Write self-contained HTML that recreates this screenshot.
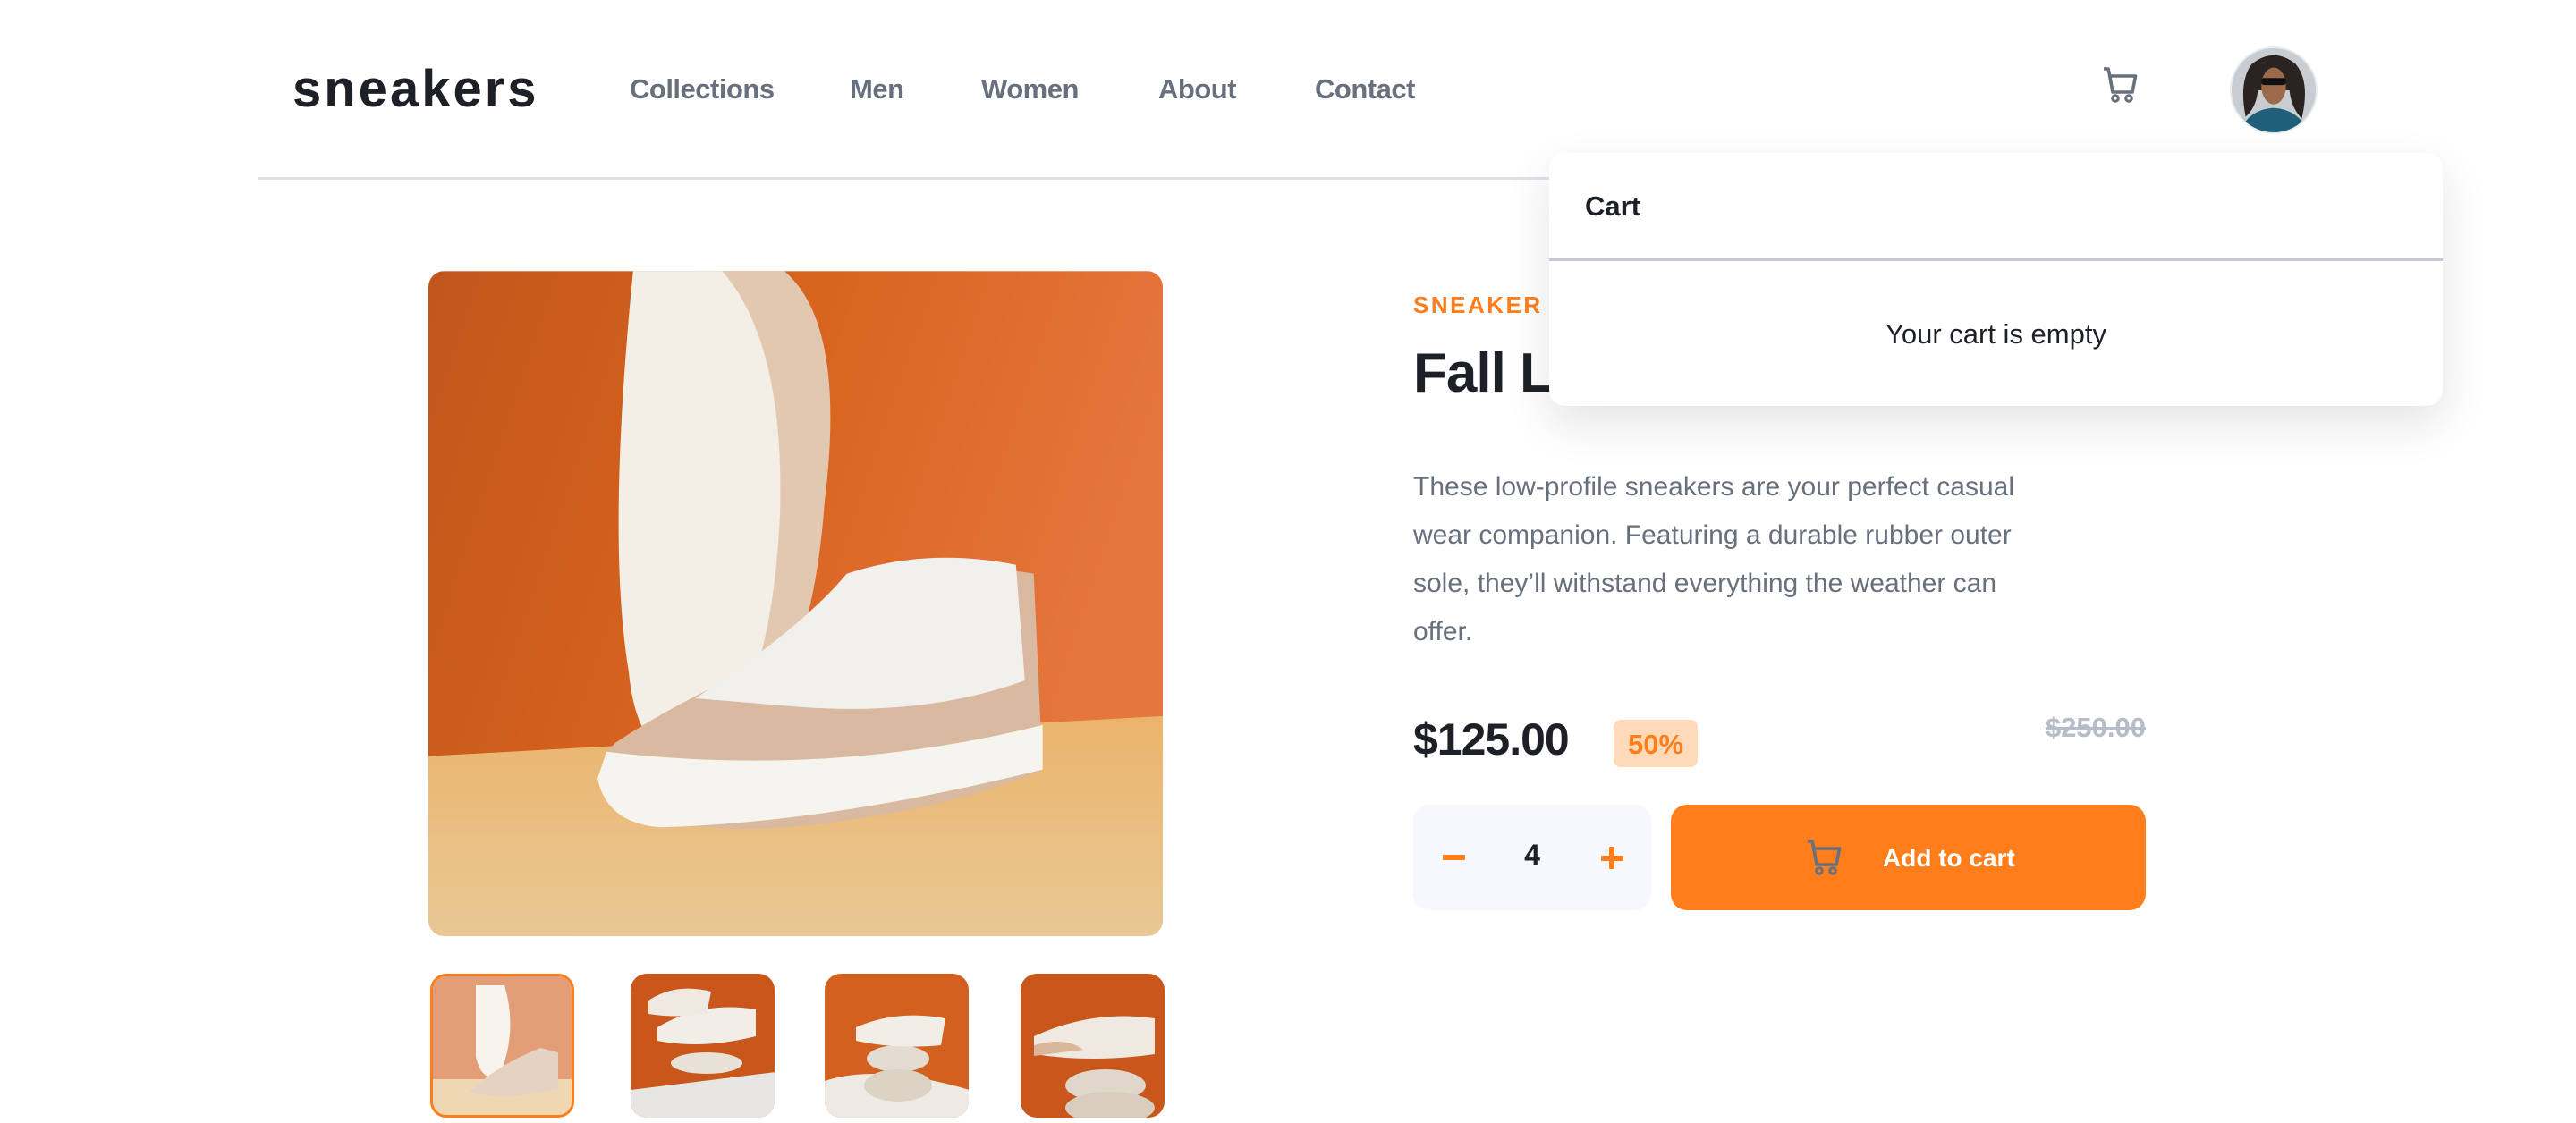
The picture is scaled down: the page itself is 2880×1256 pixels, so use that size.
<!DOCTYPE html>
<html><head><meta charset="utf-8"><style>
*{margin:0;padding:0;box-sizing:border-box}
body{width:2880px;height:1256px;overflow:hidden;background:#fff;font-family:"Liberation Sans",sans-serif;position:relative;color:#1d2026}
.abs{position:absolute}
.logo{left:327px;top:66px;font-size:58px;font-weight:bold;letter-spacing:3px;color:#1d2026}
.nav{top:82px;font-size:31px;font-weight:bold;color:#69707d;letter-spacing:-0.5px}
.hline{left:288px;top:198px;width:2300px;height:3px;background:#dfe2ea}
.pop{left:1732px;top:171px;width:999px;height:283px;background:#fff;border-radius:18px;box-shadow:0 20px 50px rgba(29,32,38,0.12)}
.img{left:479px;top:303px;width:821px;height:744px;border-radius:18px;overflow:hidden}
.th{top:1089px;width:161px;height:161px;border-radius:18px;overflow:hidden}
.desc{left:1580px;top:518px;width:820px;font-size:30px;line-height:54px;color:#69707d;white-space:nowrap}
</style></head><body>
<div class="abs logo">sneakers</div>
<div class="abs nav" style="left:704px">Collections</div>
<div class="abs nav" style="left:950px">Men</div>
<div class="abs nav" style="left:1097px">Women</div>
<div class="abs nav" style="left:1295px">About</div>
<div class="abs nav" style="left:1470px">Contact</div>
<div class="abs hline"></div>
<svg class="abs" style="left:2350px;top:74px" width="44" height="42" viewBox="0 0 22 20"><path d="M1 1h2.5l.5 2 2 11h11l1.8-9H4.5" fill="none" stroke="#69707d" stroke-width="1.8" stroke-linejoin="round"/><circle cx="7.5" cy="17.5" r="1.6" fill="none" stroke="#69707d" stroke-width="1.6"/><circle cx="15" cy="17.5" r="1.6" fill="none" stroke="#69707d" stroke-width="1.6"/></svg>
<svg class="abs" style="left:2493px;top:52px" width="98" height="98" viewBox="0 0 100 100"><defs><clipPath id="c"><circle cx="50" cy="50" r="49"/></clipPath></defs><g clip-path="url(#c)"><rect width="100" height="100" fill="#c9cdd1"/><path d="M18 80 Q10 40 25 20 Q50 0 75 20 Q92 40 82 82 Q70 70 68 50 L32 50 Q30 70 18 80Z" fill="#2a231f"/><ellipse cx="50" cy="45" rx="14" ry="21" fill="#9b6a4a"/><rect x="36" y="36" width="28" height="8" rx="3" fill="#111"/><path d="M10 100 Q20 72 50 70 Q80 72 90 100Z" fill="#1f5f7a"/></g><circle cx="50" cy="50" r="49" fill="none" stroke="#e9ecef" stroke-width="2"/></svg>

<div class="abs img"><svg width="821" height="744" viewBox="0 0 825 747"><defs><linearGradient id="g" x1="0" y1="0" x2="1" y2="0.3"><stop offset="0" stop-color="#c2561c"/><stop offset="0.5" stop-color="#d8641e"/><stop offset="1" stop-color="#e5763e"/></linearGradient><linearGradient id="f" x1="0" y1="0" x2="0" y2="1"><stop offset="0" stop-color="#eab46c"/><stop offset="1" stop-color="#e9c894"/></linearGradient></defs><rect width="825" height="747" fill="url(#g)"/><path d="M0 545 L825 500 L825 747 L0 747Z" fill="url(#f)"/><path d="M230 0 L400 0 Q470 60 445 260 Q430 470 340 540 Q250 560 230 460 Q200 300 230 0Z" fill="#e2c8b0"/><path d="M230 0 L330 0 Q400 80 395 270 Q385 500 300 545 Q235 555 225 450 Q200 300 230 0Z" fill="#f4efe6"/><path d="M210 600 Q180 560 210 530 Q300 470 430 420 Q500 350 560 330 Q620 330 680 340 L690 560 Q600 600 450 620 Q300 640 210 600Z" fill="#d9b9a0"/><path d="M300 480 Q420 400 470 340 Q560 310 660 330 L670 460 Q560 500 420 490Z" fill="#f2f0ec"/><path d="M190 570 Q200 620 260 625 Q450 620 690 560 L690 510 Q450 570 200 540Z" fill="#f6f4ef"/></svg></div>

<div class="abs th" style="left:481px;border:3px solid #ff7e1b;"><svg width="162" height="162"><rect width="162" height="162" fill="#d56a30"/><rect y="115" width="162" height="47" fill="#e9c28c"/><path d="M48 10 L80 10 Q95 60 75 110 Q55 120 48 90Z" fill="#f3eee5"/><path d="M40 130 Q70 100 120 80 L140 85 L140 125 Q90 140 40 130Z" fill="#d8bba2"/><rect width="162" height="162" fill="#fff" opacity="0.35"/></svg></div>
<div class="abs th" style="left:705px"><svg width="162" height="162"><rect width="162" height="162" fill="#c9561b"/><path d="M0 130 L162 110 L162 162 L0 162Z" fill="#e8e6e3"/><ellipse cx="85" cy="100" rx="40" ry="12" fill="#e7e1d8"/><path d="M30 60 Q80 30 140 40 L140 70 Q80 85 30 75Z" fill="#f1eee8"/><path d="M20 30 Q50 10 90 20 L85 45 Q50 50 20 45Z" fill="#efe9e1"/></svg></div>
<div class="abs th" style="left:922px"><svg width="162" height="162"><rect width="162" height="162" fill="#d3601e"/><path d="M0 120 Q60 100 162 130 L162 162 L0 162Z" fill="#ede9e3"/><ellipse cx="82" cy="95" rx="35" ry="15" fill="#e4dcd0"/><ellipse cx="82" cy="125" rx="38" ry="18" fill="#ddd3c5"/><path d="M35 60 Q80 40 135 50 L130 80 Q80 85 35 75Z" fill="#f1eee8"/></svg></div>
<div class="abs th" style="left:1141px"><svg width="162" height="162"><rect width="162" height="162" fill="#c9561b"/><ellipse cx="95" cy="125" rx="45" ry="18" fill="#e0d6ca"/><ellipse cx="100" cy="150" rx="50" ry="18" fill="#d8cdbf"/><path d="M15 70 Q80 40 150 50 L150 90 Q80 100 15 90Z" fill="#efe9e1"/><path d="M15 80 Q50 70 70 85 L15 92Z" fill="#d8b79b"/></svg></div>

<div class="abs" style="left:1580px;top:326px;font-size:26px;font-weight:bold;color:#ff7e1b;letter-spacing:2.5px">SNEAKER COMPANY</div>
<div class="abs" style="left:1580px;top:382px;font-size:62px;font-weight:bold;color:#1d2026;letter-spacing:-1px">Fall Limited Edition Sneakers</div>
<div class="abs desc">These low-profile sneakers are your perfect casual<br>wear companion. Featuring a durable rubber outer<br>sole, they’ll withstand everything the weather can<br>offer.</div>
<div class="abs" style="left:1580px;top:798px;font-size:50px;font-weight:bold;color:#1d2026;letter-spacing:-1px">$125.00</div>
<div class="abs" style="left:1804px;top:805px;width:94px;height:53px;background:#ffdab9;border-radius:8px;color:#ff7e1b;font-weight:bold;font-size:31px;text-align:center;line-height:55px">50%</div>
<div class="abs" style="left:2250px;top:796px;width:149px;text-align:right;font-size:31px;font-weight:bold;color:#b6bcc8;text-decoration:line-through">$250.00</div>
<div class="abs" style="left:1580px;top:900px;width:266px;height:118px;background:#f6f8fd;border-radius:18px"></div>
<div class="abs" style="left:1613px;top:956px;width:25px;height:6px;background:#ff7e1b;border-radius:1px"></div>
<div class="abs" style="left:1690px;top:938px;width:46px;text-align:center;font-size:32px;font-weight:bold;color:#1d2026">4</div>
<div class="abs" style="left:1790px;top:957px;width:25px;height:6px;background:#ff7e1b;border-radius:1px"></div>
<div class="abs" style="left:1799px;top:947px;width:6px;height:25px;background:#ff7e1b;border-radius:1px"></div>
<div class="abs" style="left:1868px;top:900px;width:531px;height:118px;background:#ff7e1b;border-radius:18px"></div>
<svg class="abs" style="left:2019px;top:938px" width="44" height="42" viewBox="0 0 22 20"><path d="M1 1h2.5l.5 2 2 11h11l1.8-9H4.5" fill="none" stroke="#69707d" stroke-width="1.8" stroke-linejoin="round"/><circle cx="7.5" cy="17.5" r="1.6" fill="none" stroke="#69707d" stroke-width="1.6"/><circle cx="15" cy="17.5" r="1.6" fill="none" stroke="#69707d" stroke-width="1.6"/></svg>
<div class="abs" style="left:2105px;top:944px;font-size:28px;font-weight:bold;color:#fff">Add to cart</div>

<div class="abs pop">
<div class="abs" style="left:40px;top:42px;font-size:31px;font-weight:bold;color:#1d2026">Cart</div>
<div class="abs" style="left:0;top:118px;width:999px;height:3px;background:#c4c8d2"></div>
<div class="abs" style="left:0;top:185px;width:999px;text-align:center;font-size:31px;color:#1d2026">Your cart is empty</div>
</div>
</body></html>
